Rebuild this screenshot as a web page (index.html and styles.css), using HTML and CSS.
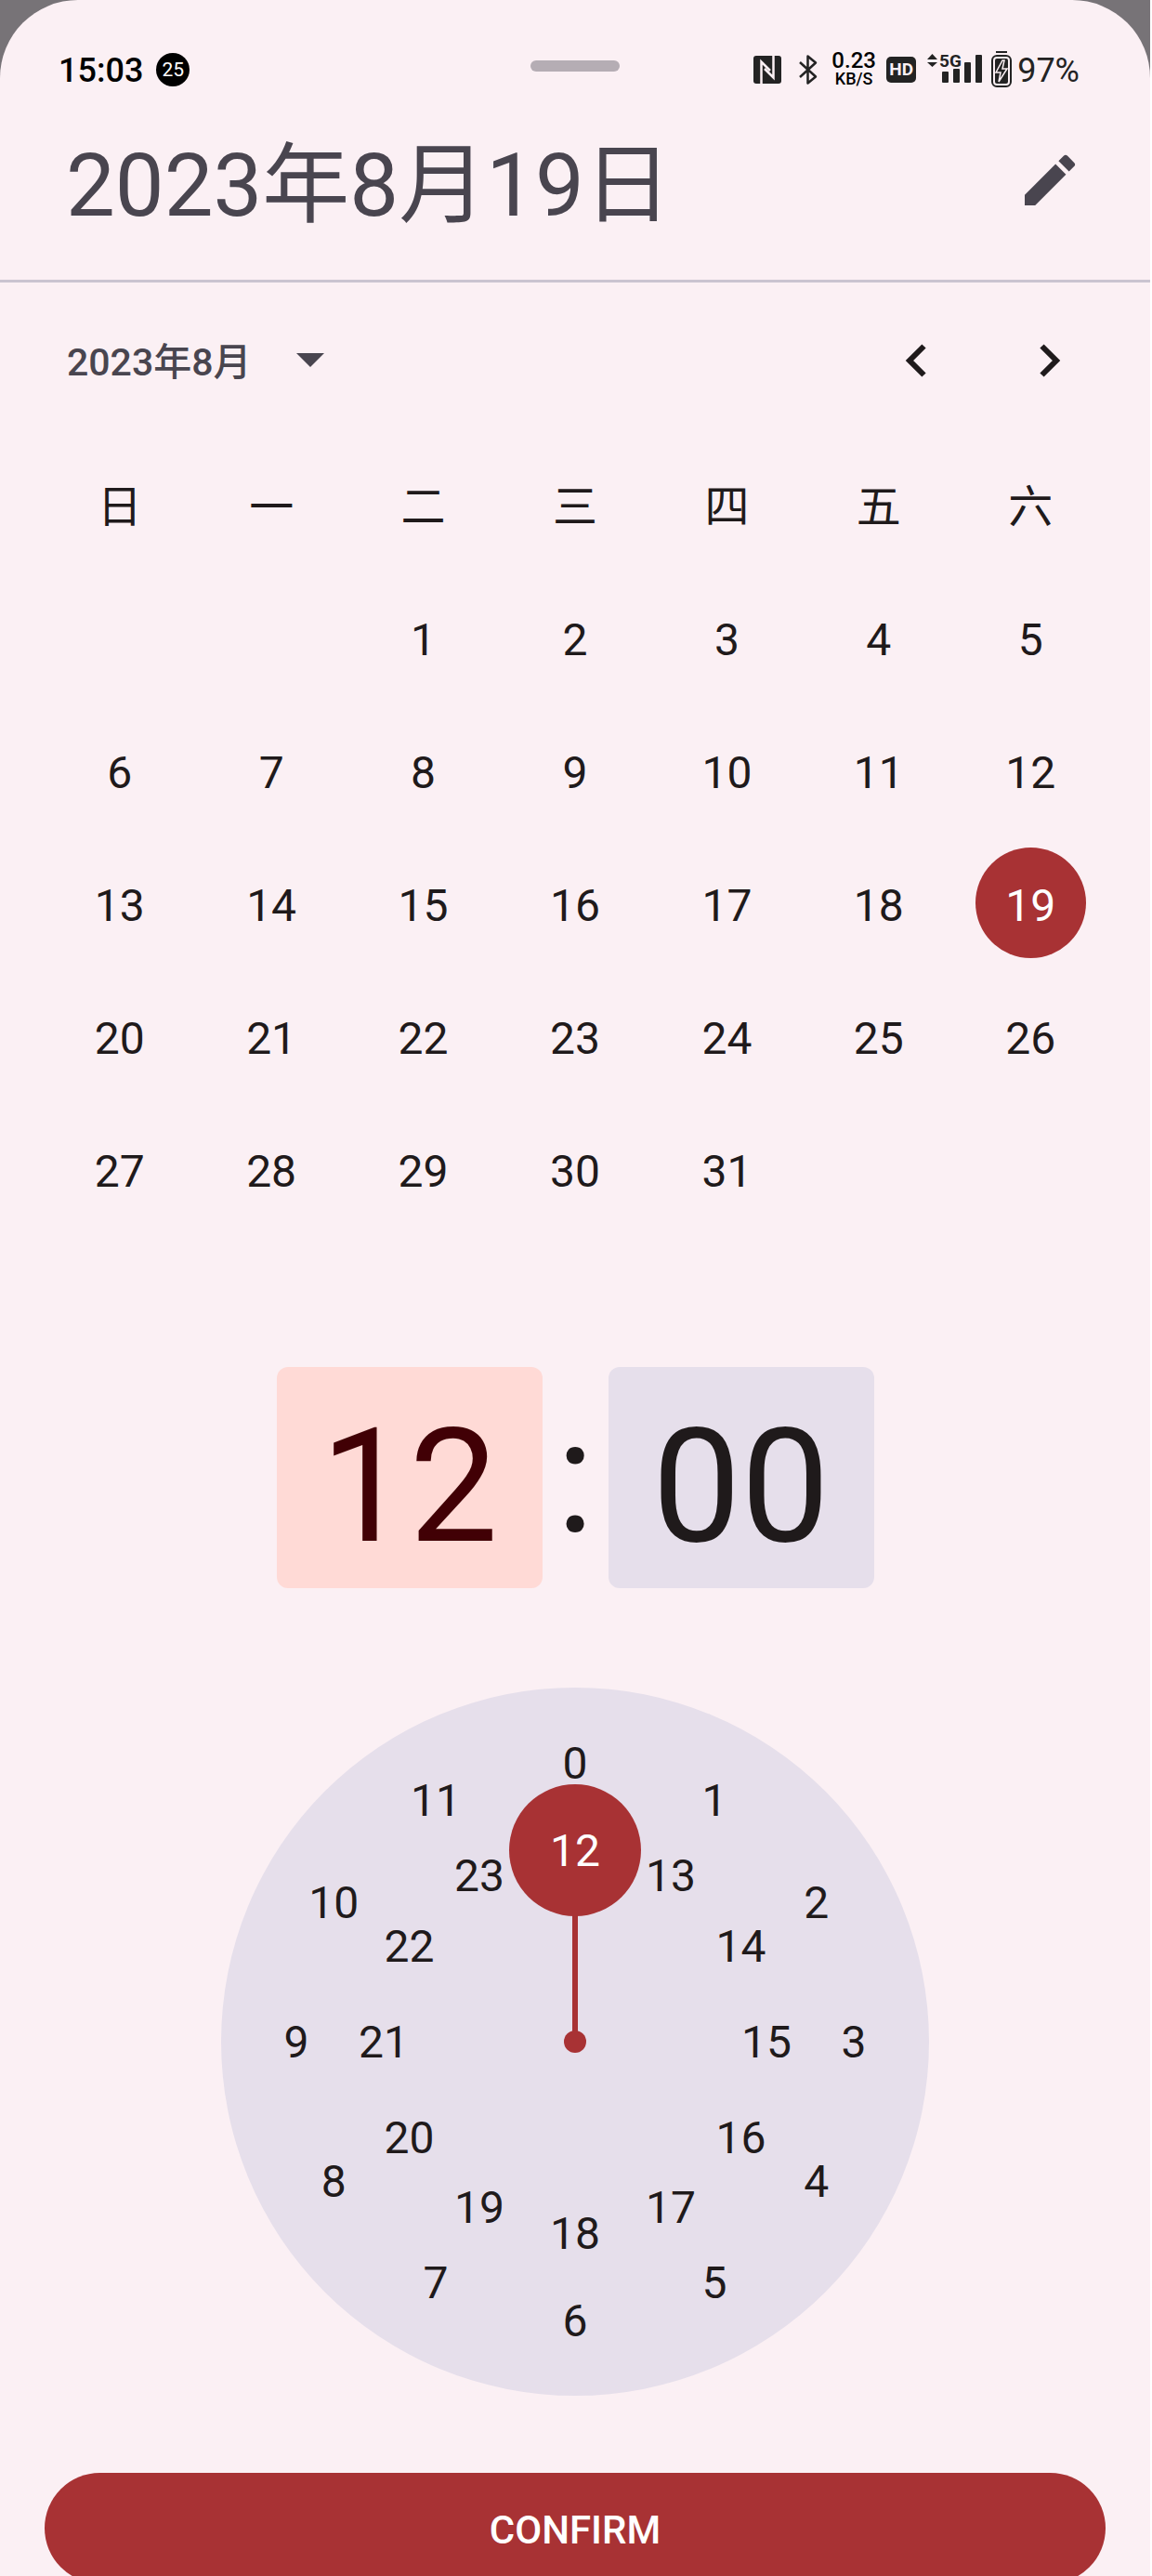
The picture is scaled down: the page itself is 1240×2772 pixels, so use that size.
FILE: index.html
```html
<!DOCTYPE html>
<html lang="zh-CN">
<head>
<meta charset="utf-8">
<meta name="viewport" content="width=device-width, initial-scale=1">
<title>2023年8月19日</title>
<link rel="stylesheet" href="styles.css">
</head>
<body>
<div class="backdrop">
<main class="sheet">
  <div class="status">
    <div class="status-left">
      <span class="clock-text">15:03</span>
      <span class="badge">25</span>
    </div>
    <div class="handle"></div>
    <div class="status-right">
      <svg class="nfc" viewBox="0 0 30 30" width="30" height="30" aria-hidden="true"><rect width="30" height="30" rx="3" fill="#232323"/><path d="M8.500 30V6.500L18 16M21.500 0V23.500L12 14" fill="none" stroke="#fbf0f4" stroke-width="2.500"/></svg>
      <svg class="bluetooth" viewBox="0 0 20 34" width="20" height="34" aria-hidden="true"><path d="M1 9L18 24.500L9.500 31.500V2.500L18 9.500L1 25" fill="none" stroke="#232323" stroke-width="2.500" stroke-linejoin="round"/></svg>
      <span class="speed"><span class="speed-value">0.23</span><span class="speed-unit">KB/S</span></span>
      <span class="hd">HD</span>
      <svg class="signal" viewBox="0 0 59 34" width="59" height="34" aria-hidden="true"><path d="M5.500 0L11 6H0ZM5.500 14L0 9H11Z" fill="#232323"/><g fill="#232323"><rect x="16" y="19" width="7" height="12" rx="1"/><rect x="28" y="16" width="7" height="15" rx="1"/><rect x="40" y="9" width="7" height="22" rx="1"/><rect x="52" y="1" width="7" height="30" rx="1"/></g><text class="signal-label" x="13" y="14">5G</text></svg>
      <svg class="battery" viewBox="0 0 22 40" width="22" height="40" aria-hidden="true"><rect x="5" y="0" width="12" height="2" fill="#232323"/><rect x="1" y="5" width="20" height="33" rx="5" fill="none" stroke="#232323" stroke-width="2"/><rect x="4" y="8" width="14" height="27" rx="2" fill="#232323"/><path d="M12 10L5 23H10L8 33L17 19H12L14 10Z" fill="#232323" stroke="#fbf0f4" stroke-width="1.500"/></svg>
      <span class="percent">97%</span>
    </div>
  </div>

  <header class="header">
    <h1 class="title">2023年8月19日</h1>
    <button class="icon-button" type="button" aria-label="Edit"><svg viewBox="3 3 18 18" width="54" height="54" aria-hidden="true"><path d="M3 17.250V21h3.750L17.810 9.940l-3.750-3.750L3 17.250zM20.710 7.040a1 1 0 0 0 0-1.410l-2.340-2.340a1 1 0 0 0-1.410 0l-1.830 1.830 3.750 3.750 1.830-1.830z" fill="#49454f"/></svg></button>
  </header>

  <div class="month-bar">
    <button class="month-select" type="button"><span class="month-label">2023年8月</span><svg viewBox="0 0 30 15" width="30" height="15" aria-hidden="true"><path d="M0 0H30L15 15Z" fill="#49454f"/></svg></button>
    <div class="month-nav">
      <button class="nav-button" type="button" aria-label="Previous month"><svg viewBox="0 0 22 36" width="22" height="36" aria-hidden="true"><path d="M19.500 2.500L4 18L19.500 33.500" fill="none" stroke="#1f1a1b" stroke-width="6"/></svg></button>
      <button class="nav-button" type="button" aria-label="Next month"><svg viewBox="0 0 22 36" width="22" height="36" aria-hidden="true"><path d="M2.500 2.500L18 18L2.500 33.500" fill="none" stroke="#1f1a1b" stroke-width="6"/></svg></button>
    </div>
  </div>

  <div class="calendar">
    <table class="days">
      <thead><tr><th>日</th><th>一</th><th>二</th><th>三</th><th>四</th><th>五</th><th>六</th></tr></thead>
      <tbody>
        <tr><td></td><td></td><td><button class="day">1</button></td><td><button class="day">2</button></td><td><button class="day">3</button></td><td><button class="day">4</button></td><td><button class="day">5</button></td></tr>
        <tr><td><button class="day">6</button></td><td><button class="day">7</button></td><td><button class="day">8</button></td><td><button class="day">9</button></td><td><button class="day">10</button></td><td><button class="day">11</button></td><td><button class="day">12</button></td></tr>
        <tr><td><button class="day">13</button></td><td><button class="day">14</button></td><td><button class="day">15</button></td><td><button class="day">16</button></td><td><button class="day">17</button></td><td><button class="day">18</button></td><td><button class="day selected">19</button></td></tr>
        <tr><td><button class="day">20</button></td><td><button class="day">21</button></td><td><button class="day">22</button></td><td><button class="day">23</button></td><td><button class="day">24</button></td><td><button class="day">25</button></td><td><button class="day">26</button></td></tr>
        <tr><td><button class="day">27</button></td><td><button class="day">28</button></td><td><button class="day">29</button></td><td><button class="day">30</button></td><td><button class="day">31</button></td><td></td><td></td></tr>
      </tbody>
    </table>
  </div>

  <div class="time">
    <button class="time-box active" type="button">12</button>
    <span class="colon">:</span>
    <button class="time-box" type="button">00</button>
  </div>

  <div class="dial">
    <div class="hand"></div>
    <div class="pivot"></div>
    <button class="hour" style="--h:0">0</button>
    <button class="hour" style="--h:1">1</button>
    <button class="hour" style="--h:2">2</button>
    <button class="hour" style="--h:3">3</button>
    <button class="hour" style="--h:4">4</button>
    <button class="hour" style="--h:5">5</button>
    <button class="hour" style="--h:6">6</button>
    <button class="hour" style="--h:7">7</button>
    <button class="hour" style="--h:8">8</button>
    <button class="hour" style="--h:9">9</button>
    <button class="hour" style="--h:10">10</button>
    <button class="hour" style="--h:11">11</button>
    <button class="hour inner selected" style="--h:12">12</button>
    <button class="hour inner" style="--h:13">13</button>
    <button class="hour inner" style="--h:14">14</button>
    <button class="hour inner" style="--h:15">15</button>
    <button class="hour inner" style="--h:16">16</button>
    <button class="hour inner" style="--h:17">17</button>
    <button class="hour inner" style="--h:18">18</button>
    <button class="hour inner" style="--h:19">19</button>
    <button class="hour inner" style="--h:20">20</button>
    <button class="hour inner" style="--h:21">21</button>
    <button class="hour inner" style="--h:22">22</button>
    <button class="hour inner" style="--h:23">23</button>
  </div>

  <div class="actions">
    <button class="confirm" type="button">CONFIRM</button>
  </div>
</main>
</div>
</body>
</html>
```
FILE: styles.css
```css
* { box-sizing: border-box; }

html { height: 100%; overflow: hidden; }

body {
  height: 100%;
  margin: 0;
  padding-right: 2px;
  overflow: hidden;
  background: #fff;
  color: #1f1a1b;
  font-family: Roboto, "Noto Sans CJK SC", sans-serif;
  font-size: 48px;
}

button {
  margin: 0;
  padding: 0;
  border: 0;
  background: none;
  color: inherit;
  font: inherit;
  cursor: pointer;
}

svg { display: block; flex: none; overflow: visible; }

.backdrop { min-height: 100%; background: #777377; }

.sheet {
  min-height: 100vh;
  border-radius: 84px 84px 0 0;
  background: #fbf0f4;
}

/* Status bar */
.status {
  display: grid;
  grid-template-columns: minmax(0, 1fr) auto minmax(0, 1fr);
  align-items: center;
  padding: 54px 63px 0;
  height: 94px;
  color: #000;
  font-size: 36px;
  line-height: 40px;
}
.status-left { display: flex; align-items: center; gap: 14px; font-weight: 500; }
.badge {
  width: 36px;
  height: 36px;
  border-radius: 50%;
  background: #000;
  color: #fff;
  font-size: 21px;
  font-weight: 400;
  line-height: 36px;
  text-align: center;
}
.clock-text { padding-top: 2px; }
.handle {
  width: 96px;
  height: 12px;
  border-radius: 6px;
  background: #b5adb4;
  align-self: start;
  margin-top: 11px;
}
.status-right {
  display: flex;
  align-items: center;
  justify-content: flex-end;
  padding-right: 13px;
  color: #232323;
}
.bluetooth { margin-left: 19px; }
.speed {
  display: flex;
  flex-direction: column;
  align-items: center;
  width: 50px;
  margin-left: 14px;
  color: #000;
  font-weight: 500;
}
.speed-value { font-size: 24px; line-height: 20px; }
.speed-unit { font-size: 18px; line-height: 20px; }
.hd {
  width: 32px;
  height: 28px;
  margin-left: 10px;
  border-radius: 5px;
  background: #232323;
  color: #fbf0f4;
  font-size: 19px;
  font-weight: 700;
  line-height: 28px;
  text-align: center;
}
.signal { margin-left: 12px; }
.signal-label { font-size: 19px; font-weight: 700; fill: #232323; }
.battery { margin-left: 10px; }
.percent { margin-left: 6px; padding-top: 2px; }

/* Selected date */
.header {
  display: flex;
  align-items: center;
  justify-content: space-between;
  padding: 44px 81px 51px 71px;
  border-bottom: 3px solid #cac4d0;
  color: #49454f;
}
.title { margin: 0; padding-top: 12px; font-size: 94px; font-weight: 400; line-height: 100px; }

/* Month navigation */
.month-bar {
  display: flex;
  align-items: center;
  justify-content: space-between;
  height: 167px;
  padding: 0 36px 0 72px;
}
.month-select { display: flex; align-items: center; gap: 48px; color: #49454f; font-size: 41px; font-weight: 500; }
.month-label { padding-bottom: 4px; }
.month-nav { display: flex; }
.nav-button { display: grid; place-items: center; width: 144px; height: 144px; }

/* Calendar grid */
.calendar { padding: 0 47px; }
.days { width: 100%; border-collapse: collapse; table-layout: fixed; }
.days th, .days td { height: 143px; padding: 0; text-align: center; vertical-align: middle; }
.days th { padding-bottom: 3px; font-weight: 400; }
.day { display: block; width: 119px; height: 119px; margin: 0 auto; padding-top: 6px; border-radius: 50%; }
.selected { background: #a83234; color: #fff; }

/* Time display */
.time { display: flex; justify-content: center; margin-top: 142px; font-size: 170px; line-height: 238px; }
.time-box { width: 286px; height: 238px; padding-top: 10px; border-radius: 12px; background: #e6dfeb; }
.time-box.active { background: #ffdad6; color: #410005; }
.colon { width: 71px; text-align: center; }

/* Clock dial */
.dial {
  position: relative;
  width: 762px;
  height: 762px;
  margin: 107px auto 0;
  border-radius: 50%;
  background: #e6dfeb;
}
.hour {
  --r: 300px;
  position: absolute;
  left: calc(50% + sin(var(--h) * 30deg) * var(--r));
  top: calc(50% - cos(var(--h) * 30deg) * var(--r));
  width: 84px;
  height: 84px;
  border-radius: 50%;
  transform: translate(-50%, -50%);
}
.hour.inner { --r: 206px; }
.hour.selected { width: 142px; height: 142px; }
.hand {
  position: absolute;
  left: calc(50% - 3px);
  bottom: 50%;
  width: 6px;
  height: 206px;
  background: #a83234;
}
.pivot {
  position: absolute;
  left: calc(50% - 12px);
  top: calc(50% - 12px);
  width: 24px;
  height: 24px;
  border-radius: 50%;
  background: #a83234;
}

/* Confirm */
.actions { padding: 83px 48px 0; }
.confirm {
  display: block;
  width: 100%;
  height: 119px;
  border-radius: 60px;
  background: #a83234;
  color: #fff;
  font-size: 42px;
  font-weight: 500;
  padding-top: 4px;
}
```
